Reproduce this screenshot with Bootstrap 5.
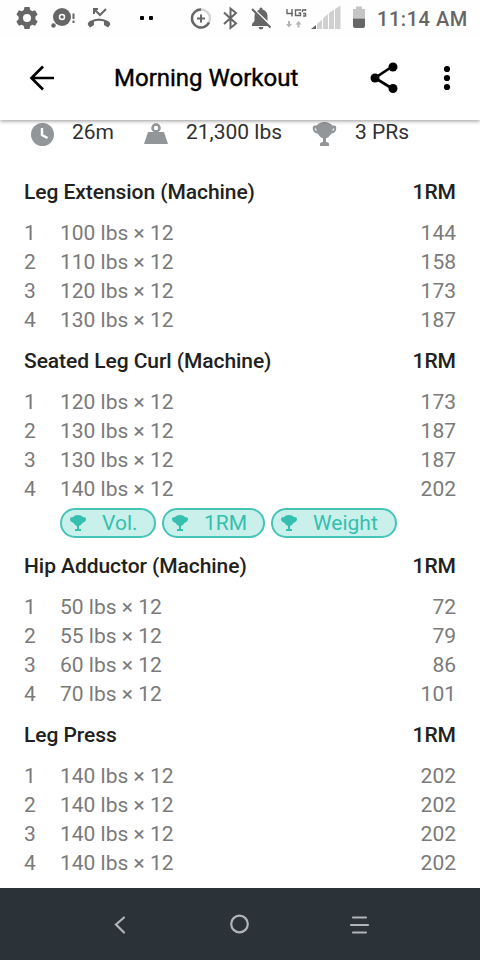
<!DOCTYPE html>
<html lang="en">
<head>
<meta charset="utf-8">
<meta name="viewport" content="width=device-width, initial-scale=1">
<title>Morning Workout</title>
<link href="https://cdn.jsdelivr.net/npm/bootstrap@5.3.0/dist/css/bootstrap.min.css" rel="stylesheet">
<style>
body{font-family:Roboto,sans-serif;font-size:21px;line-height:29px;color:#7a7a7a;background:#fff;height:960px;overflow:hidden}
svg{display:block;flex:none}
.status{height:38px;color:#666;background:#fefefe;position:relative;z-index:3}
.clock{font-size:20px;font-weight:500;line-height:38px;letter-spacing:.55px;padding-left:8px;white-space:nowrap}
.appbar{height:82px;background:#fff;box-shadow:0 1px 4px rgba(0,0,0,.42);z-index:2;position:relative}
.title{font-size:24px;font-weight:400;-webkit-text-stroke:.4px #000;color:#000;line-height:80px;width:256px;padding-left:36px;white-space:nowrap}
.stats{height:46px;color:#303030;padding:1px 0 0 30px}
.stats span{line-height:22px;white-space:nowrap}
.exercise-title{height:53px;color:#212121;font-weight:500}
.exercise-title span:first-child{letter-spacing:-.06px}
.num{width:36px}
.exercise{padding:0 24px}
.prs{height:36px;gap:6px;padding:4px 0 2px 36px}
.pr{height:30px;border:2px solid #45c5b7;border-radius:15px;background:#c9f0ea;color:#35bfaf;padding-left:8px}
.pr span{line-height:26px;padding-left:16px;white-space:nowrap}
.vol{width:96px}.orm{width:103px}.wt{width:126px}
.sysnav{height:72px;background:#2b3338}
</style>
</head>
<body class="d-flex flex-column">
<svg width="0" height="0" class="position-absolute"><defs>
<symbol id="cup" viewBox="0 0 24 24"><path fill="currentColor" fill-rule="evenodd" d="M4 3.500Q7 0 12 0T20 3.500H22Q24 3.500 24 6Q23.500 11 19 11.500Q16.500 15.500 13.500 16.500V20Q16.500 20 16.500 22V24H7.500V22Q7.500 20 10.500 20V16.500Q7.500 15.500 5 11.500Q.5 11 0 6Q0 3.500 2 3.500ZM2.200 6.500Q2.300 8.500 4.200 9L3.600 6.500ZM21.800 6.500H20.400L19.800 9Q21.700 8.500 21.800 6.500Z"/></symbol>
<symbol id="cup-solid" viewBox="0 0 24 24"><path fill="currentColor" d="M4 3.500Q7 0 12 0T20 3.500H22Q24 3.500 24 6Q23.500 11 19 11.500Q16.500 15.500 13.500 16.500V21H16.500V24H7.500V21H10.500V16.500Q7.500 15.500 5 11.500Q.5 11 0 6Q0 3.500 2 3.500Z"/></symbol>
</defs></svg>
<header class="status d-flex">
<svg width="369" height="38" viewBox="0 0 369 38" fill="none" stroke="#666" stroke-width="2">
<path fill="#666" stroke="none" fill-rule="evenodd" d="M24.500 7H29.500L30.200 10L32.300 11.200L35.100 10.200L37.600 14.500L35.400 16.700V19.300L37.600 21.500L35.100 25.800L32.200 24.800L30.200 26L29.500 29H24.500L23.800 26L21.700 24.800L18.900 25.800L16.400 21.500L18.600 19.300V16.700L16.400 14.500L18.900 10.200L21.700 11.200L23.800 10ZM27 14A4 4 0 1 0 27 22A4 4 0 1 0 27 14Z"/>
<circle cx="62" cy="17" r="9" fill="#666" stroke="none"/><circle cx="62" cy="17" r="2.500" stroke="#fff" stroke-width="1.500"/><circle cx="53.500" cy="25.500" r="2.200" fill="#666" stroke="none"/><path d="M73.500 13.500V19M73.500 20.500V23"/>
<path fill="#666" stroke="none" d="M88 25Q87 23 90 21Q99 16 108 21Q111 23 110 25L108 27.500L104 25V21.500Q99 20 94 21.500V25L90 27.500Z"/><path d="M94 14V9H98M94.500 9.500L100 15L106 9"/>
<rect x="140" y="16" width="4" height="4" rx="1" fill="#000" stroke="none"/><rect x="149" y="16" width="4" height="4" rx="1" fill="#000" stroke="none"/>
<circle cx="201" cy="18.500" r="9" stroke="#d4d4d4" stroke-width="2.500"/><path stroke-width="2.500" d="M201 9.500A9 9 0 1 0 209 22.500"/><path d="M201 14.500V22.500M197 18.500H205"/>
<path d="M224 12.500L236 23.500L230.500 28V8.500L236 13L224 24"/>
<path fill="#666" stroke="none" d="M255 13L269 26H252V24L254.500 21V16ZM257 11L259.500 9.500V8.500Q261 6.500 262.500 8.500V9.500Q267.500 11 267.500 16V21ZM258.500 27H263.500Q263 29.500 261 29.500T258.500 27Z"/><path d="M252 9L270.500 27.500"/>
<path stroke-width="1.400" d="M287 9V13.500H293M292 9V16.500M301 10H295.500V15.500H300.500V13H298.500M305 10H302.500V12M305.500 9V11M303 13.500H305.500V16H303"/><path fill="#b5b5b5" stroke="none" d="M288 21H290V24H292L289 27.500L286 24H288ZM297.500 27.500V24.500H295.500L298.500 21L301.500 24.500H299.500V27.500Z"/>
<path fill="#d0d0d0" stroke="none" d="M317 24L322 19.500V29H317ZM323 18.500L328 14V29H323ZM329 13L334 9.500V29H329ZM335 9L340.500 5.500V29H335Z"/><path fill="#666" stroke="none" d="M311 29L316 25V29Z"/>
<path fill="#c5c5c5" stroke="none" d="M353 9H356V6.500H362V9H365V18.500H353Z"/><path fill="#666" stroke="none" d="M353 18.500H365V26Q365 28 363 28H355Q353 28 353 26Z"/>
</svg>
<span class="clock">11:14 AM</span>
</header>
<nav class="appbar d-flex align-items-start">
<svg width="78" height="80" fill="none" stroke="#000" stroke-width="2.700"><path d="M54 40H32M43 28.500L31.500 40L43 51.500"/></svg>
<span class="title">Morning Workout</span>
<svg width="146" height="80"><path d="M59 28L41 40L59 51" fill="none" stroke="#000" stroke-width="2.700"/><g><circle cx="59" cy="29" r="4.500"/><circle cx="41" cy="40" r="4.500"/><circle cx="59" cy="50.500" r="4.500"/><circle cx="113" cy="31" r="3.100"/><circle cx="113" cy="40" r="3.100"/><circle cx="113" cy="49" r="3.100"/></g></svg>
</nav>
<section class="stats d-flex">
<svg width="42" height="28"><circle cx="12.500" cy="13.500" r="11.500" fill="#929699"/><path d="M12 7V14L17.500 17" fill="none" stroke="#fff" stroke-width="2.400"/></svg>
<span style="width:72px">26m</span>
<svg width="42" height="28"><path d="M4 11H20L24 23H0Z" fill="#929699"/><circle cx="12" cy="7" r="3.500" fill="#fff" stroke="#929699" stroke-width="2.500"/></svg>
<span style="width:126px">21,300 lbs</span>
<svg width="25" height="25" viewBox="0 -1 24 25" color="#929699"><use href="#cup" width="24" height="24"/></svg>
<span style="padding-left:18px">3 PRs</span>
</section>
<main id="log" class="flex-grow-1 overflow-hidden"></main>
<footer class="sysnav"><svg width="480" height="72" fill="none" stroke="#afb5ba" stroke-width="2.200" stroke-linecap="round"><path d="M124 29.500L116 36.500L124 44.500"/><circle cx="239.500" cy="36" r="8.300"/><path d="M353 29.500H366M351 37H368M353 44.500H366"/></svg></footer>
<script>
const exercises=[
["Leg Extension (Machine)",[[100,144],[110,158],[120,173],[130,187]]],
["Seated Leg Curl (Machine)",[[120,173],[130,187],[130,187],[140,202]],[["Vol.","vol"],["1RM","orm"],["Weight","wt"]]],
["Hip Adductor (Machine)",[[50,72],[55,79],[60,86],[70,101]]],
["Leg Press",[[140,202],[140,202],[140,202],[140,202]]]];
document.getElementById("log").innerHTML=exercises.map(([name,sets,prs])=>`<section class="exercise"><div class="exercise-title d-flex align-items-center justify-content-between"><span>${name}</span><span>1RM</span></div>${sets.map(([w,m],i)=>`<div class="d-flex"><span class="num">${i+1}</span><span class="lift flex-grow-1">${w} lbs × 12</span><span>${m}</span></div>`).join("")}${prs?`<div class="prs d-flex">${prs.map(([t,c])=>`<div class="pr ${c} d-flex align-items-center"><svg width="16" height="16"><use href="#cup-solid" width="16" height="16"/></svg><span>${t}</span></div>`).join("")}</div>`:""}</section>`).join("");
</script>
<script src="https://cdn.jsdelivr.net/npm/bootstrap@5.3.0/dist/js/bootstrap.bundle.min.js"></script>
</body>
</html>
